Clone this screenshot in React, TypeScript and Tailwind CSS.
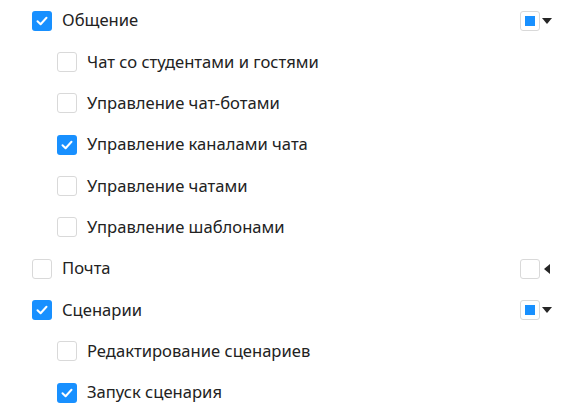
import type { ReactNode } from "react";

type Item = { label: string; checked: boolean };

type Group = {
  label: string;
  checked: boolean;
  open: boolean;
  items: Item[];
};

const groups: Group[] = [
  {
    label: "Общение",
    checked: true,
    open: true,
    items: [
      { label: "Чат со студентами и гостями", checked: false },
      { label: "Управление чат-ботами", checked: false },
      { label: "Управление каналами чата", checked: true },
      { label: "Управление чатами", checked: false },
      { label: "Управление шаблонами", checked: false },
    ],
  },
  { label: "Почта", checked: false, open: false, items: [] },
  {
    label: "Сценарии",
    checked: true,
    open: true,
    items: [
      { label: "Редактирование сценариев", checked: false },
      { label: "Запуск сценария", checked: true },
    ],
  },
];

function Check({ checked }: { checked: boolean }) {
  if (checked) {
    return (
      <span className="flex h-5 w-5 shrink-0 items-center justify-center rounded-[3px] bg-[#1890ff]">
        <svg width="12" height="10" viewBox="0 0 12 10" fill="none">
          <path d="M1.5 5.2 4.6 8.2 10.5 1.8" stroke="#fff" strokeWidth="2" strokeLinecap="round" strokeLinejoin="round" />
        </svg>
      </span>
    );
  }
  return <span className="h-5 w-5 shrink-0 rounded-[3px] border border-[#d9d9d9] bg-white" />;
}

function Row({ indent, checked, children, right }: { indent?: boolean; checked: boolean; children: ReactNode; right?: ReactNode }) {
  return (
    <div className={`flex h-[41.33px] items-center ${indent ? "pl-[57px]" : "pl-[32px]"}`}>
      <Check checked={checked} />
      <span className="ml-[10px] text-[16.6px] text-[#222]">{children}</span>
      {right}
    </div>
  );
}

function Toggle({ open }: { open: boolean }) {
  return (
    <div className="ml-auto mr-[34px] flex items-center">
      <span className="flex h-5 w-5 items-center justify-center rounded-[3px] border border-[#d9d9d9] bg-white">
        {open && <span className="h-[10px] w-[10px] bg-[#1890ff]" />}
      </span>
      <span className="flex w-[14px] justify-center">
        {open ? (
          <svg width="10" height="6" viewBox="0 0 10 6">
            <path d="M0 0h10L5 6z" fill="#262626" />
          </svg>
        ) : (
          <svg width="6" height="10" viewBox="0 0 6 10">
            <path d="M6 0v10L0 5z" fill="#262626" />
          </svg>
        )}
      </span>
    </div>
  );
}

export default function App() {
  return (
    <div className="h-[406px] w-[588px] overflow-hidden bg-white font-['Noto_Sans',sans-serif]">
      {groups.map((g) => (
        <div key={g.label}>
          <Row checked={g.checked} right={<Toggle open={g.open} />}>
            {g.label}
          </Row>
          {g.open &&
            g.items.map((it) => (
              <Row key={it.label} indent checked={it.checked}>
                {it.label}
              </Row>
            ))}
        </div>
      ))}
    </div>
  );
}
